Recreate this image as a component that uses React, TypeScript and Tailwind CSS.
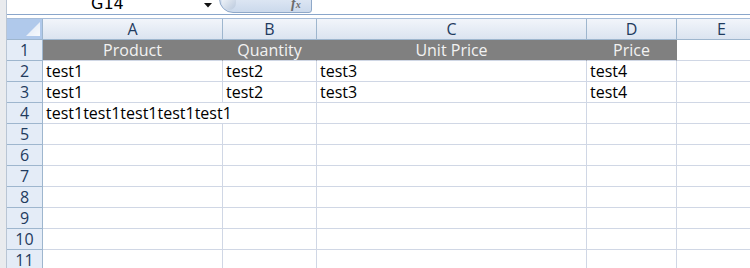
import React from "react";

const cols = [
  { key: "A", w: "w-[180px]" },
  { key: "B", w: "w-[94px]" },
  { key: "C", w: "w-[270px]" },
  { key: "D", w: "w-[90px]" },
  { key: "E", w: "w-[90px]" },
];

const data: (string | null)[][] = [
  ["test1", "test2", "test3", "test4", null],
  ["test1", "test2", "test3", "test4", null],
];

const cellFont = { fontFamily: "'Open Sans', 'Noto Sans', sans-serif" } as const;

function RowHeader({ n }: { n: number }) {
  return (
    <div className="w-[36px] h-[21px] shrink-0 bg-[#e4ecf7] border-r border-b border-r-[#9eb6ce] border-b-[#9eb6ce] flex items-end justify-center text-[16px] leading-[20px] text-[#1f3b5e]">
      {n}
    </div>
  );
}

export default function App() {
  const headerRow = ["Product", "Quantity", "Unit Price", "Price"];
  return (
    <div className="w-[750px] h-[268px] overflow-hidden bg-white flex" style={cellFont}>
      {/* left strip */}
      <div className="w-[7px] shrink-0 bg-[#e9ebee] border-r border-[#b9c5d4]" />
      <div className="flex-1 flex flex-col min-w-0">
        {/* formula bar */}
        <div className="h-[14px] flex items-stretch shrink-0">
          <div className="w-[205px] relative bg-white">
            <span
              className="absolute left-[84px] top-[-4px] text-[16px] leading-[16px] text-black"
              style={{ fontFamily: "'DejaVu Sans', sans-serif" }}
            >
              G14
            </span>
            <svg className="absolute left-[197px] top-[3px]" width="8" height="5" viewBox="0 0 8 5">
              <path d="M0 0 H8 L4 4.5 Z" fill="#111" />
            </svg>
          </div>
          <div className="w-[7px]" />
          <div className="w-[93px] relative">
            <div className="absolute left-0 right-0 top-[-14px] bottom-[1px] rounded-bl-[14px] rounded-br-[3px] border border-[#8fa8c8] bg-gradient-to-b from-[#eef3fa] to-[#cbd9ec]" />
            <div className="absolute left-[3px] top-[-6px] w-[14px] h-[16px] rounded-full bg-gradient-to-br from-white to-[#b3c3d8] opacity-80" />
            <span
              className="absolute left-[72px] top-[-4px] text-[14px] italic font-bold text-[#6b6b6b] leading-[16px]"
              style={{ fontFamily: "'Liberation Serif', serif" }}
            >
              f<span className="text-[10px]">x</span>
            </span>
          </div>
          <div className="flex-1 bg-white" />
        </div>
        <div className="h-[1px] bg-[#8aa6cb] shrink-0" />
        <div className="h-[3px] bg-white shrink-0" />
        <div className="h-[1px] bg-[#a6bcd8] shrink-0" />
        {/* column headers */}
        <div className="flex shrink-0">
          <div className="w-[36px] h-[21px] shrink-0 relative bg-[#b0c9eb] border-r border-b border-[#9eb6ce]">
            <svg className="absolute right-[2px] bottom-[3px]" width="14" height="14" viewBox="0 0 14 14">
              <defs>
                <linearGradient id="tri" x1="0" y1="0" x2="1" y2="1">
                  <stop offset="0" stopColor="#dbe6f5" />
                  <stop offset="1" stopColor="#f7f9fc" />
                </linearGradient>
              </defs>
              <path d="M14 0 V14 H0 Z" fill="url(#tri)" />
            </svg>
          </div>
          {cols.map((c) => (
            <div
              key={c.key}
              className={`${c.w} h-[21px] shrink-0 bg-gradient-to-b from-[#f2f5fa] to-[#dbe4f0] border-r border-b border-[#9eb6ce] flex items-end justify-center text-[16px] leading-[20px] text-[#1f3b5e]`}
            >
              {c.key}
            </div>
          ))}
        </div>
        {/* row 1 */}
        <div className="flex shrink-0">
          <RowHeader n={1} />
          {cols.map((c, i) => (
            <div
              key={c.key}
              className={`${c.w} h-[21px] shrink-0 ${i < 4 ? "bg-[#808080] border-r border-r-[#808080] border-b border-b-[#d0d7e5]" : "bg-white border-r border-b border-[#d0d7e5]"} flex items-end justify-center text-[16px] leading-[20px] text-[#f2f2f2]`}
            >
              {i < 4 ? headerRow[i] : ""}
            </div>
          ))}
        </div>
        {/* rows 2,3 */}
        {data.map((r, ri) => (
          <div key={ri} className="flex shrink-0">
            <RowHeader n={ri + 2} />
            {cols.map((c, i) => (
              <div
                key={c.key}
                className={`${c.w} h-[21px] shrink-0 border-r border-b border-[#d0d7e5] flex items-end pl-[3px] text-[16px] leading-[20px] text-black`}
              >
                {r[i] ?? ""}
              </div>
            ))}
          </div>
        ))}
        {/* row 4 */}
        <div className="flex shrink-0">
          <RowHeader n={4} />
          <div className="w-[274px] h-[21px] shrink-0 border-r border-b border-[#d0d7e5] flex items-end pl-[3px] text-[16px] leading-[20px] text-black">
            test1test1test1test1test1
          </div>
          {cols.slice(2).map((c) => (
            <div key={c.key} className={`${c.w} h-[21px] shrink-0 border-r border-b border-[#d0d7e5]`} />
          ))}
        </div>
        {/* empty rows */}
        {[5, 6, 7, 8, 9, 10, 11].map((n) => (
          <div key={n} className="flex shrink-0">
            <RowHeader n={n} />
            {cols.map((c) => (
              <div key={c.key} className={`${c.w} h-[21px] shrink-0 border-r border-b border-[#d0d7e5]`} />
            ))}
          </div>
        ))}
      </div>
    </div>
  );
}
